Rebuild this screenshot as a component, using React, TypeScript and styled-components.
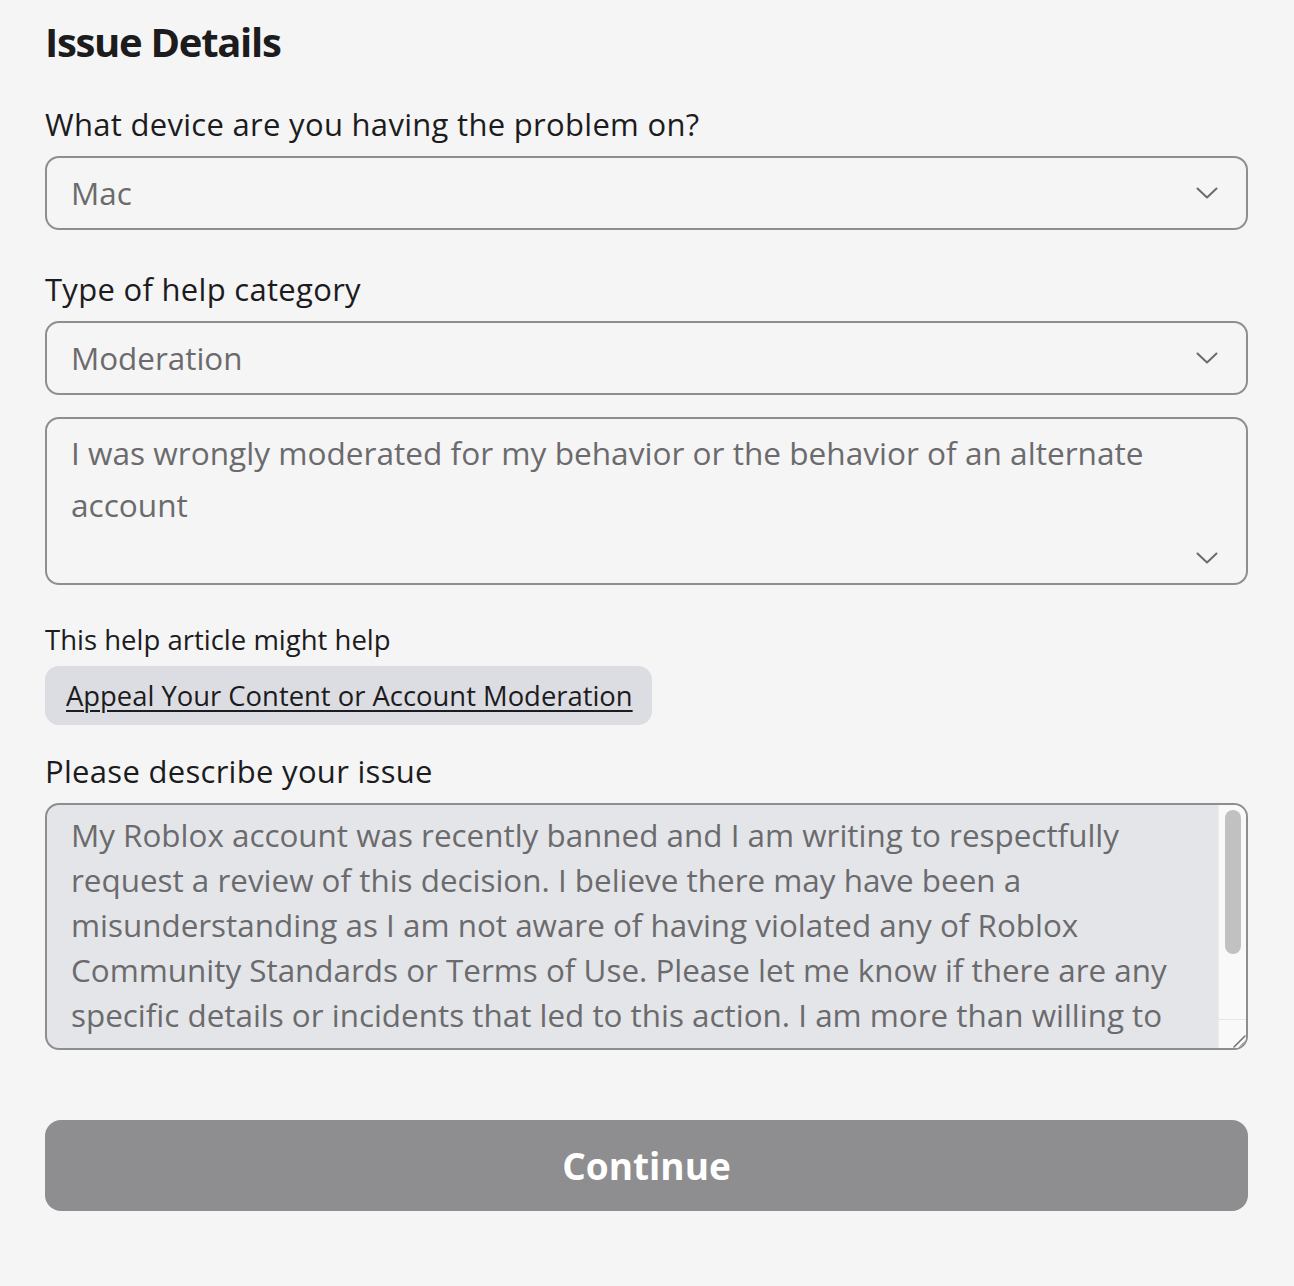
import React from "react";
import styled, { createGlobalStyle } from "styled-components";

const FONT = `"Open Sans", "Noto Sans", "Liberation Sans", sans-serif`;

const GlobalStyle = createGlobalStyle`
  html, body {
    margin: 0;
    padding: 0;
    background: #f5f5f5;
  }
  body {
    font-family: ${FONT};
    color: #1c1c1e;
  }
  * { box-sizing: border-box; }
`;

const Page = styled.div`
  display: flex;
  flex-direction: column;
  padding: 17px 46px 75px 45px;
  min-height: 1286px;
  background: #f5f5f5;
`;

const Title = styled.h1`
  margin: 0 0 37px;
  font-size: 40px;
  line-height: 50px;
  font-weight: 700;
  letter-spacing: -1.3px;
  color: #1c1c1e;
`;

const Label = styled.label<{ $gapTop?: number }>`
  display: block;
  margin: ${(p) => p.$gapTop ?? 0}px 0 12px;
  font-size: 31px;
  line-height: 40px;
  letter-spacing: 0.3px;
  font-weight: 400;
  color: #1c1c1e;
`;

const Select = styled.div<{ $tall?: boolean; $gapTop?: number }>`
  display: flex;
  align-items: ${(p) => (p.$tall ? "flex-start" : "center")};
  justify-content: space-between;
  height: ${(p) => (p.$tall ? 168 : 74)}px;
  margin-top: ${(p) => p.$gapTop ?? 0}px;
  padding: ${(p) => (p.$tall ? "8px 28px 0 24px" : "0 28px 0 24px")};
  border: 2px solid #8e8e90;
  border-radius: 14px;
  background: #f5f5f5;
`;

const SelectValue = styled.span<{ $tall?: boolean }>`
  font-size: ${(p) => (p.$tall ? 31.6 : 31.4)}px;
  line-height: ${(p) => (p.$tall ? "52px" : "40px")};
  color: #6b6b6d;
  max-width: 1090px;
`;

const ChevronWrap = styled.span<{ $tall?: boolean }>`
  display: flex;
  flex-shrink: 0;
  align-self: ${(p) => (p.$tall ? "flex-end" : "center")};
  margin-bottom: ${(p) => (p.$tall ? "19px" : "0")};
`;

const HelpText = styled.p`
  margin: 38px 0 9px;
  font-size: 27.5px;
  line-height: 34px;
  color: #1c1c1e;
`;

const ArticlePill = styled.div`
  display: flex;
  align-items: center;
  align-self: flex-start;
  height: 59px;
  padding: 0 19px 0 21px;
  border-radius: 14px;
  background: #dcdde2;
`;

const ArticleLink = styled.a`
  font-size: 27.4px;
  line-height: 34px;
  color: #1c1c1e;
  text-decoration: underline;
  text-underline-offset: 4px;
  text-decoration-thickness: 2px;
`;

const TextAreaBox = styled.div`
  display: flex;
  height: 247px;
  border: 2px solid #8e8e90;
  border-radius: 14px;
  background: #e4e5e9;
  overflow: hidden;
`;

const TextArea = styled.textarea`
  flex: 1;
  display: block;
  height: 100%;
  padding: 7px 28px 0 24px;
  border: none;
  background: transparent;
  color: #6b6b6d;
  font-family: ${FONT};
  font-size: 31.4px;
  line-height: 45px;
  resize: none;
  outline: none;
  overflow: hidden;
`;

const ScrollTrack = styled.div`
  display: flex;
  flex-direction: column;
  justify-content: space-between;
  width: 28px;
  flex-shrink: 0;
  padding-top: 5px;
  background: #f9f9f9;
  border-left: 1px solid #ececec;
`;

const ScrollThumb = styled.div`
  width: 16px;
  height: 144px;
  margin-left: 6px;
  border-radius: 8px;
  background: #c1c1c1;
`;

const Resizer = styled.div`
  display: flex;
  align-items: flex-end;
  justify-content: flex-end;
  height: 29px;
  border-top: 1px solid #e6e6e6;
  background: #f9f9f9;
`;

const ContinueButton = styled.button`
  margin-top: 70px;
  height: 91px;
  width: 100%;
  border: none;
  border-radius: 16px;
  background: #8e8e90;
  color: #ffffff;
  font-family: ${FONT};
  font-size: 37px;
  font-weight: 700;
  cursor: not-allowed;
`;

const Chevron: React.FC = () => (
  <svg width="22" height="12" viewBox="0 0 22 12" fill="none">
    <path d="M1.5 1.5 L11 10.5 L20.5 1.5" stroke="#6b6b6d" strokeWidth="2" strokeLinecap="round" strokeLinejoin="round" />
  </svg>
);

const ResizeGrip: React.FC = () => (
  <svg width="14" height="14" viewBox="0 0 14 14" fill="none">
    <path d="M2 13 L13 2 M8 13 L13 8" stroke="#6f6f6f" strokeWidth="1.5" strokeLinecap="round" />
  </svg>
);

const issueText =
  "My Roblox account was recently banned and I am writing to respectfully request a review of this decision. I believe there may have been a misunderstanding as I am not aware of having violated any of Roblox Community Standards or Terms of Use. Please let me know if there are any specific details or incidents that led to this action. I am more than willing to cooperate and provide any information you may need to resolve this matter. I truly value my account and the community, and I would appreciate the chance to have it reinstated. Thank you for your time and consideration.";

export default function App() {
  return (
    <>
      <GlobalStyle />
      <Page>
        <Title>Issue Details</Title>

        <Label>What device are you having the problem on?</Label>
        <Select>
          <SelectValue>Mac</SelectValue>
          <ChevronWrap>
            <Chevron />
          </ChevronWrap>
        </Select>

        <Label $gapTop={39}>Type of help category</Label>
        <Select>
          <SelectValue>Moderation</SelectValue>
          <ChevronWrap>
            <Chevron />
          </ChevronWrap>
        </Select>

        <Select $tall $gapTop={22}>
          <SelectValue $tall>
            I was wrongly moderated for my behavior or the behavior of an alternate account
          </SelectValue>
          <ChevronWrap $tall>
            <Chevron />
          </ChevronWrap>
        </Select>

        <HelpText>This help article might help</HelpText>
        <ArticlePill>
          <ArticleLink href="#">Appeal Your Content or Account Moderation</ArticleLink>
        </ArticlePill>

        <Label $gapTop={26}>Please describe your issue</Label>
        <TextAreaBox>
          <TextArea readOnly value={issueText} />
          <ScrollTrack>
            <ScrollThumb />
            <Resizer>
              <ResizeGrip />
            </Resizer>
          </ScrollTrack>
        </TextAreaBox>

        <ContinueButton disabled>Continue</ContinueButton>
      </Page>
    </>
  );
}
